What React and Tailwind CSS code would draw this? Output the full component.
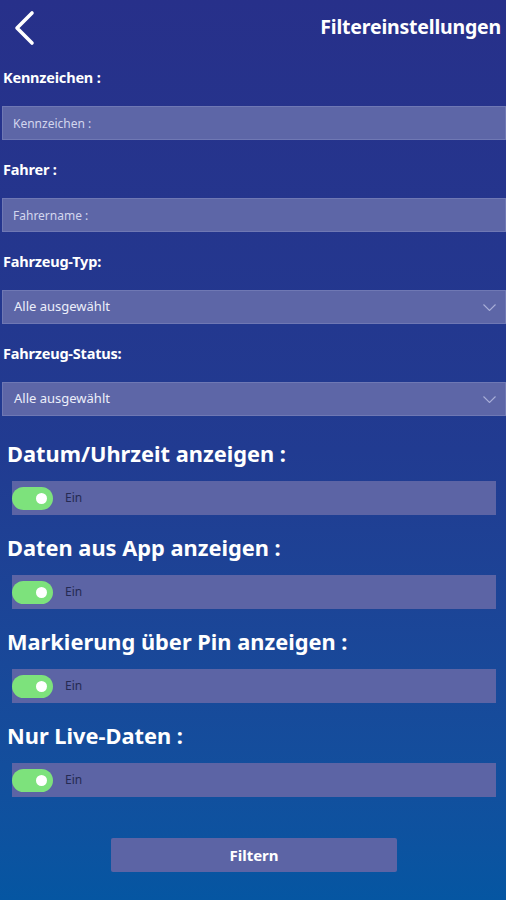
import { useState } from 'react';

const FONT = { fontFamily: '"Noto Sans", "Open Sans", sans-serif' };

function Chevron() {
  return (
    <svg width="26" height="36" viewBox="0 0 26 36" fill="none">
      <path d="M20 3 L5 18 L20 33" stroke="white" strokeWidth="3.6" strokeLinecap="round" strokeLinejoin="round" />
    </svg>
  );
}

function SmallChevron() {
  return (
    <svg width="13" height="7" viewBox="0 0 13 7" fill="none">
      <path d="M0.5 0.5 L6.5 6.5 L12.5 0.5" stroke="#a9afd8" strokeWidth="1.1" />
    </svg>
  );
}

function Field({ label, children }) {
  return (
    <div className="pb-[19px]">
      <div className="h-[20px] mb-[19px] pl-[3px] text-[14.5px] font-bold text-white leading-[20px] tracking-[-0.2px]">{label}</div>
      {children}
    </div>
  );
}

function Toggle({ label }) {
  const [on, setOn] = useState(true);
  return (
    <div className="pb-[19px]">
      <div className="h-[28px] mb-[13px] pl-[7px] text-[21.8px] font-bold text-white leading-[28px]">{label}</div>
      <div className="ml-[12px] mr-[10px] h-[34px] bg-[#5c64a5] flex items-center">
        <button onClick={() => setOn(!on)}
          className={`w-[41px] h-[23px] rounded-full flex items-center ${on ? 'bg-[#7de27c] justify-end' : 'bg-[#9aa0c8] justify-start'} px-[6px]`}>
          <span className="w-[11px] h-[11px] rounded-full bg-white" />
        </button>
        <span className="ml-[12px] text-[12px] text-[#252a52]">{on ? 'Ein' : 'Aus'}</span>
      </div>
    </div>
  );
}

export default function App() {
  return (
    <div style={FONT} className="w-[506px] h-[900px] overflow-hidden bg-linear-to-b from-[#27308a] via-[#213b91] to-[#0556a2]">
      {/* Header */}
      <div className="h-[67px] flex items-start justify-between pt-[10px]">
        <div className="pl-[12px]"><Chevron /></div>
        <div className="pr-[5px] pt-[4px] text-[19.5px] font-bold text-white leading-[26px] tracking-[-0.2px]">Filtereinstellungen</div>
      </div>

      <Field label="Kennzeichen :">
        <input placeholder="Kennzeichen :"
          className="ml-[2px] w-[504px] h-[34px] px-[10px] bg-[#5d66a7] border border-[#6f78b4] text-[12px] text-white placeholder:text-[#d3d6ee] outline-none" />
      </Field>
      <Field label="Fahrer :">
        <input placeholder="Fahrername :"
          className="ml-[2px] w-[504px] h-[34px] px-[10px] bg-[#5d66a7] border border-[#6f78b4] text-[12px] text-white placeholder:text-[#d3d6ee] outline-none" />
      </Field>
      <Field label="Fahrzeug-Typ:">
        <div className="ml-[2px] w-[504px] h-[34px] pl-[11px] pr-[9px] bg-[#5d66a7] border border-[#6f78b4] flex items-center justify-between">
          <span className="text-[13px] text-[#eceefa]">Alle ausgewählt</span>
          <SmallChevron />
        </div>
      </Field>
      <Field label="Fahrzeug-Status:">
        <div className="ml-[2px] w-[504px] h-[34px] pl-[11px] pr-[9px] bg-[#5d66a7] border border-[#6f78b4] flex items-center justify-between">
          <span className="text-[13px] text-[#eceefa]">Alle ausgewählt</span>
          <SmallChevron />
        </div>
      </Field>

      <div className="pt-[5px]">
        <Toggle label="Datum/Uhrzeit anzeigen :" />
        <Toggle label="Daten aus App anzeigen :" />
        <Toggle label="Markierung über Pin anzeigen :" />
        <Toggle label="Nur Live-Daten :" />
      </div>

      <div className="flex justify-center pt-[22px] pl-[2px]">
        <button className="w-[286px] h-[34px] rounded-[2px] bg-[#5c64a5] text-[15px] font-bold text-white">Filtern</button>
      </div>
    </div>
  );
}
